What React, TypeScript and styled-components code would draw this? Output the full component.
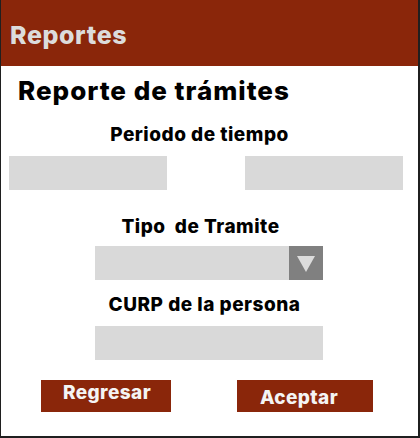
import { createGlobalStyle } from "styled-components";
import styled from "styled-components";

const GlobalStyle = createGlobalStyle`
  html, body {
    margin: 0;
    padding: 0;
    background: #ffffff;
  }
  * {
    box-sizing: border-box;
  }
`;

const App = () => {
  return (
    <>
      <GlobalStyle />
      <Frame>
        <Header>
          <HeaderTitle>Reportes</HeaderTitle>
        </Header>
        <Body>
          <Title>Reporte de trámites</Title>
          <Label $top={17} $shift={-10}>
            Periodo de tiempo
          </Label>
          <DateRow>
            <Field $width={158} />
            <Field $width={158} />
          </DateRow>
          <Label $top={25} $shift={-9}>
            Tipo  de Tramite
          </Label>
          <Select>
            <SelectValue />
            <SelectArrow>
              <svg width="18" height="16" viewBox="0 0 18 16">
                <polygon points="0,0 18,0 9,16" fill="#dcdcdc" />
              </svg>
            </SelectArrow>
          </Select>
          <Label $top={13} $shift={-5}>
            CURP de la persona
          </Label>
          <CenterField $width={228} />
          <ButtonRow>
            <Button $width={130} $offset={1} $shift={1}>
              Regresar
            </Button>
            <Button $width={136} $offset={6} $shift={-6}>
              Aceptar
            </Button>
          </ButtonRow>
        </Body>
      </Frame>
    </>
  );
};

const Frame = styled.div`
  width: 420px;
  height: 438px;
  border-left: 1px solid #1f1f1f;
  border-right: 2px solid #1f1f1f;
  border-bottom: 2px solid #1f1f1f;
  background: #ffffff;
  display: flex;
  flex-direction: column;
  font-family: Inter, "Liberation Sans", sans-serif;
`;

const Header = styled.div`
  height: 66px;
  background: #8a260a;
  display: flex;
  align-items: flex-start;
  padding: 20px 0 0 9px;
`;

const HeaderTitle = styled.h1`
  margin: 0;
  font-size: 25px;
  line-height: 30px;
  font-weight: 800;
  letter-spacing: 0.6px;
  color: #dcdcdc;
`;

const Body = styled.div`
  display: flex;
  flex-direction: column;
`;

const Title = styled.h2`
  margin: 10px 0 0 17px;
  font-size: 26px;
  line-height: 30px;
  font-weight: 800;
  letter-spacing: 1px;
  color: #000000;
`;

// $shift moves the centred text left (negative) or right (positive)
const Label = styled.p<{ $top: number; $shift: number }>`
  margin: ${(p) => p.$top}px 0 0;
  padding: 0 ${(p) => Math.max(0, -p.$shift * 2)}px 0 ${(p) => Math.max(0, p.$shift * 2)}px;
  font-size: 19px;
  line-height: 24px;
  font-weight: 800;
  letter-spacing: 0.5px;
  color: #000000;
  text-align: center;
  white-space: pre;
`;

const DateRow = styled.div`
  margin-top: 9px;
  display: flex;
  justify-content: space-between;
  padding: 0 15px 0 8px;
`;

const Field = styled.div<{ $width: number }>`
  width: ${(p) => p.$width}px;
  height: 34px;
  background: #d9d9d9;
`;

const CenterField = styled(Field)`
  margin: 9px 0 0 94px;
`;

const Select = styled.div`
  margin: 7px 0 0 94px;
  width: 228px;
  height: 34px;
  display: flex;
`;

const SelectValue = styled.div`
  flex: 1;
  background: #d9d9d9;
`;

const SelectArrow = styled.div`
  width: 34px;
  background: #808080;
  display: flex;
  align-items: center;
  justify-content: center;
  padding-top: 1px;
`;

const ButtonRow = styled.div`
  margin-top: 20px;
  display: flex;
  gap: 66px;
  padding-left: 40px;
`;

const Button = styled.button<{ $width: number; $offset: number; $shift: number }>`
  width: ${(p) => p.$width}px;
  height: 32px;
  border: none;
  border-radius: 0;
  background: #8a260a;
  color: #f4f4f4;
  font-family: Inter, "Liberation Sans", sans-serif;
  font-size: 19px;
  line-height: 24px;
  font-weight: 800;
  letter-spacing: 0.4px;
  padding: ${(p) => p.$offset}px ${(p) => Math.max(0, -p.$shift * 2)}px 0
    ${(p) => Math.max(0, p.$shift * 2)}px;
  display: flex;
  align-items: flex-start;
  justify-content: center;
`;

export default App;
